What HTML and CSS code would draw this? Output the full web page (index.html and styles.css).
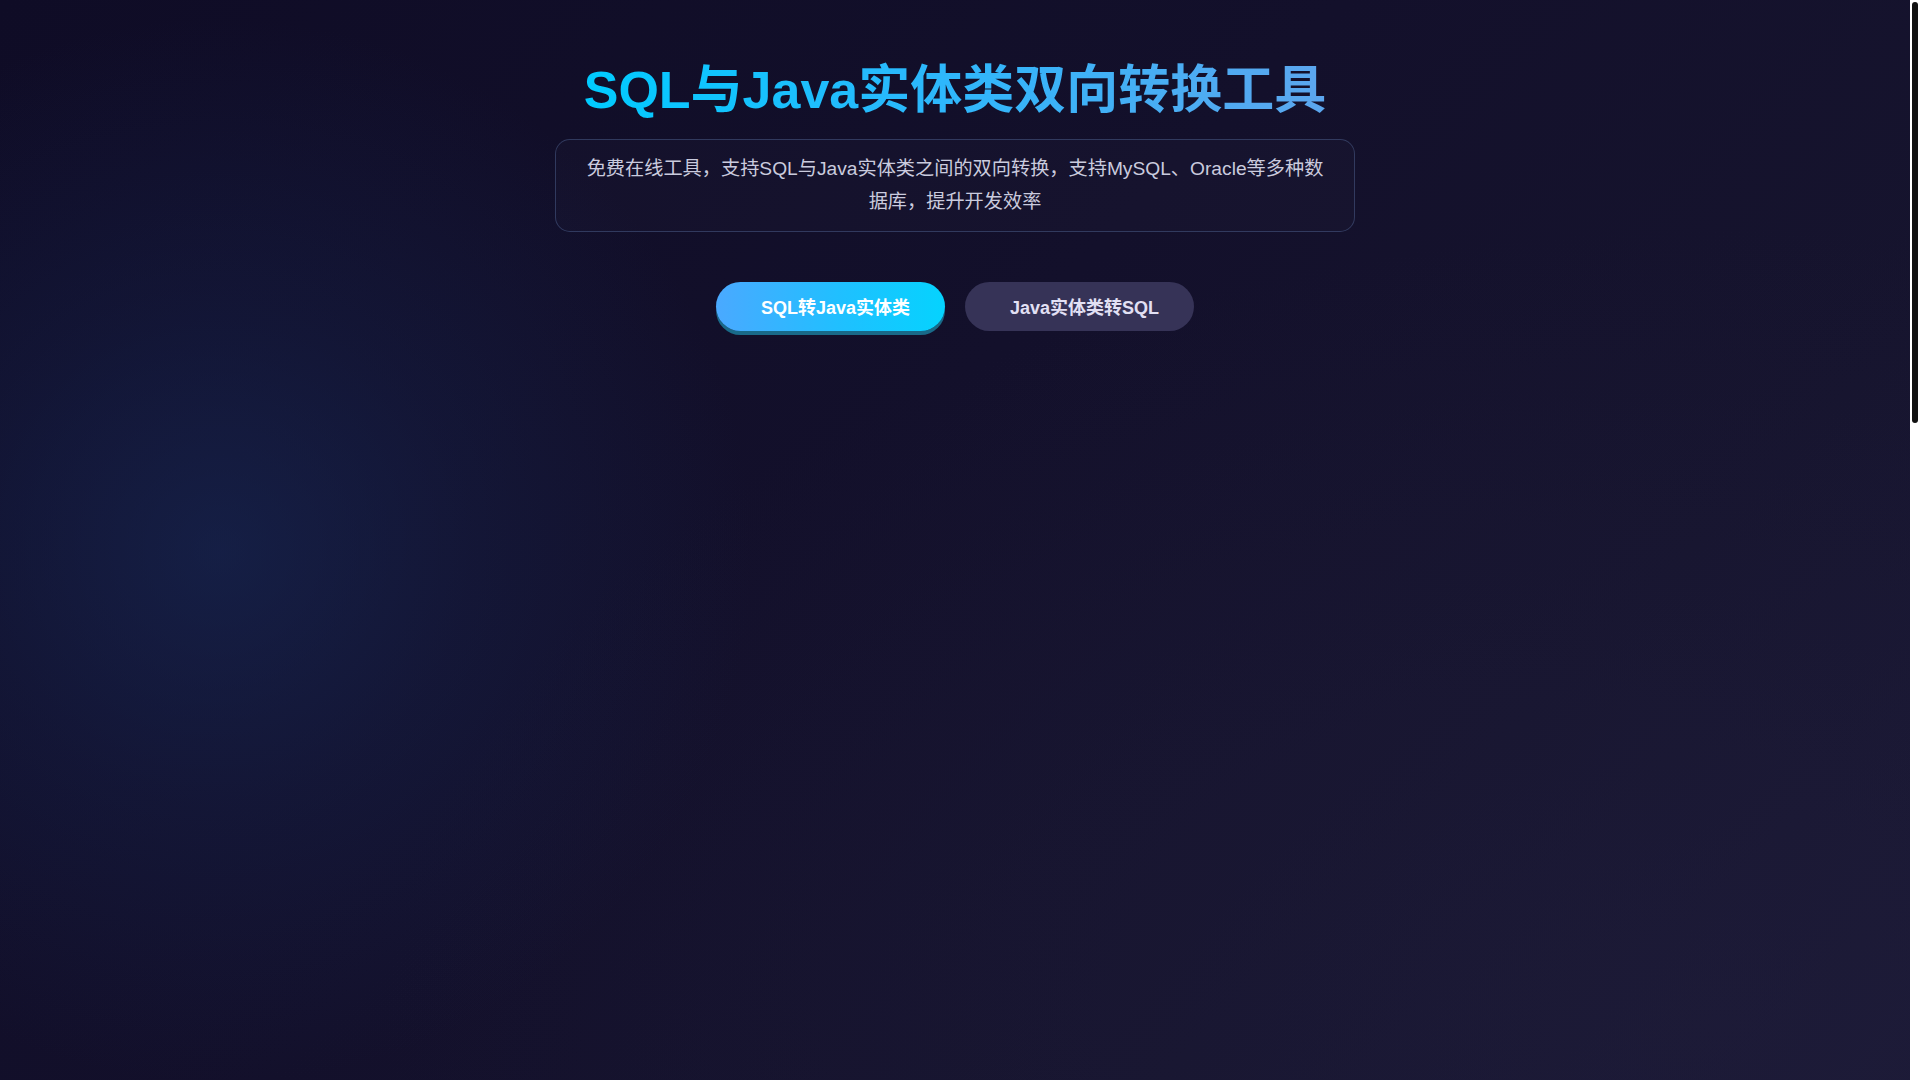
FILE: index.html
```html
<!DOCTYPE html>
<html lang="zh-CN">
<head>
<meta charset="UTF-8">
<title>SQL与Java实体类双向转换工具</title>
<link rel="stylesheet" href="styles.css">
</head>
<body>
<div class="app">
  <div class="scroller">
    <div class="page">
      <header class="hero">
        <h1 class="title">SQL与Java实体类双向转换工具</h1>
        <p class="subtitle">免费在线工具，支持SQL与Java实体类之间的双向转换，支持MySQL、Oracle等多种数据库，提升开发效率</p>
      </header>
      <nav class="tabs">
        <button class="tab tab-active" type="button">SQL转Java实体类</button>
        <button class="tab" type="button">Java实体类转SQL</button>
      </nav>
      <main class="workspace"></main>
    </div>
  </div>
  <div class="rail" aria-hidden="true"><div class="rail-thumb"></div></div>
</div>
</body>
</html>
```
FILE: styles.css
```css
html,
body {
  height: 100%;
}
body {
  margin: 0;
  overflow: hidden;
  font-family: "Liberation Sans", "Noto Sans CJK SC", sans-serif;
  color: #c8c9dc;
  background-color: #13112c;
}
.app {
  display: flex;
  height: 100%;
}
.scroller {
  flex: 1;
  height: 100%;
  overflow-y: auto;
  scrollbar-width: none;
  background-color: #13112c;
  background-image:
    radial-gradient(circle at 11.5% 51%, rgba(24, 44, 92, 0.55) 0%, rgba(24, 44, 92, 0.25) 14%, rgba(24, 44, 92, 0) 30%),
    radial-gradient(ellipse at 90% 95%, rgba(32, 30, 60, 0.5) 0%, rgba(32, 30, 60, 0) 55%),
    linear-gradient(135deg, #0f0c26 0%, #13102b 45%, #16142e 75%, #1a1834 100%);
}
.scroller::-webkit-scrollbar {
  display: none;
}
.rail {
  flex: 0 0 10px;
  height: 100%;
  background: #ffffff;
}
.rail-thumb {
  margin: 2px 2px 0;
  height: 421px;
  border-radius: 3px;
  background: #111111;
}
.page {
  padding-top: 59px;
  display: flex;
  flex-direction: column;
  align-items: center;
}
.hero {
  display: flex;
  flex-direction: column;
  align-items: center;
}
.title {
  margin: 0 0 18px;
  font-size: 52px;
  line-height: 1.2;
  font-weight: bold;
  background: linear-gradient(90deg, #00cbff 0%, #2bb8fc 45%, #5ca6ee 100%);
  -webkit-background-clip: text;
  background-clip: text;
  color: transparent;
  -webkit-text-fill-color: transparent;
}
.subtitle {
  box-sizing: border-box;
  width: 800px;
  margin: 0 0 50px;
  padding: 13px 24px 12px;
  border: 1px solid rgba(88, 112, 162, 0.42);
  border-radius: 15px;
  background: rgba(255, 255, 255, 0.015);
  font-size: 19.2px;
  line-height: 32.6px;
  text-align: center;
  color: #cacbde;
}
.tabs {
  display: flex;
  justify-content: center;
  gap: 20px;
}
.tab {
  padding: 14px 35px 10px 45px;
  border: none;
  border-radius: 50px;
  font-family: "Liberation Sans", "Noto Sans CJK SC", sans-serif;
  font-size: 18px;
  line-height: 25px;
  font-weight: bold;
  color: #e2e0f4;
  background: #363357;
  cursor: pointer;
}
.tab-active {
  color: #ffffff;
  background: linear-gradient(90deg, #4aa9ff 0%, #1fc0ff 55%, #05d3fe 100%);
  box-shadow: 0 4px 0 #196a89;
}
.workspace {
  width: 100%;
  height: 2390px;
  margin-top: 30px;
}
```
